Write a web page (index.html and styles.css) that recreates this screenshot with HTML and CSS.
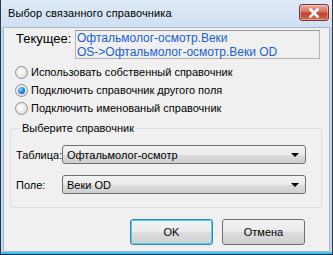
FILE: index.html
```html
<!DOCTYPE html>
<html lang="ru">
  <head>
    <meta charset="UTF-8" />
    <title>Выбор связанного справочника</title>
    <link rel="stylesheet" href="styles.css">
  </head>
  <body>
    <div class="window">
      <div class="titlebar">
        <span class="title">Выбор связанного справочника</span>
        <div class="close-btn">
          <svg width="14" height="10" viewBox="0 0 14 10">
            <path d="M3.5 1.5 L10.5 8.5 M10.5 1.5 L3.5 8.5" stroke="#fff" stroke-width="2.6" stroke-linecap="square" />
          </svg>
        </div>
      </div>
      <div class="client">
        <div class="current">
          <span class="current-label">Текущее:</span>
          <div class="current-box">
            <div>Офтальмолог-осмотр.Веки</div>
            <div>OS-&gt;Офтальмолог-осмотр.Веки OD</div>
          </div>
        </div>

        <div class="radios">
          <label class="radio"><span class="dot"></span>Использовать собственный справочник</label>
          <label class="radio checked"><span class="dot"></span>Подключить справочник другого поля</label>
          <label class="radio"><span class="dot"></span>Подключить именованый справочник</label>
        </div>

        <fieldset class="group">
          <legend>Выберите справочник</legend>
          <div class="row">
            <span class="row-label">Таблица:</span>
            <div class="combo"><span>Офтальмолог-осмотр</span><span class="arrow"></span></div>
          </div>
          <div class="row">
            <span class="row-label">Поле:</span>
            <div class="combo"><span>Веки OD</span><span class="arrow"></span></div>
          </div>
        </fieldset>

        <div class="buttons">
          <button class="btn default">OK</button>
          <button class="btn">Отмена</button>
        </div>
      </div>
    </div>
  </body>
</html>
```

FILE: styles.css
```css
* {
  margin: 0;
  padding: 0;
  box-sizing: border-box;
  font-family: Tahoma, "Liberation Sans", sans-serif;
}

body {
  width: 333px;
  height: 255px;
  overflow: hidden;
  background: #ffffff;
}

.window {
  width: 333px;
  height: 255px;
  display: flex;
  flex-direction: column;
  border-left: 1px solid #2b3746;
  border-right: 1px solid #2b3746;
  border-bottom: 1px solid #1c2a38;
  background: #c2d6ec;
  padding: 0 2px 2px 2px;
  position: relative;
}

/* cyan glow along the bottom edge */
.window::after {
  content: "";
  position: absolute;
  left: 0;
  right: 0;
  bottom: 0;
  height: 2px;
  background: #3cc4f2;
}

.titlebar {
  height: 27px;
  flex-shrink: 0;
  display: flex;
  align-items: flex-start;
  justify-content: space-between;
  margin: 0 -2px;
  padding: 4px 3px 0 7px;
  background: linear-gradient(to bottom, #dfeaf7 0%, #cfdff2 100%);
}

.title {
  font-size: 11px;
  letter-spacing: 0.1px;
  color: #000;
  padding-top: 3px;
}

.close-btn {
  width: 30px;
  height: 17px;
  border: 1px solid #7a3633;
  border-radius: 3px;
  background: linear-gradient(to bottom, #e8aca2 0%, #d7715f 45%, #c0402c 55%, #d1704f 100%);
  box-shadow: inset 0 0 0 1px rgba(255, 255, 255, 0.35);
  display: flex;
  align-items: center;
  justify-content: center;
}

.client {
  flex: 1;
  background: #f0f0f0;
  border: 1px solid #a8b8cc;
  padding: 2px 7px 0 6px;
  color: #000;
}

.current {
  display: flex;
  align-items: flex-start;
}

.current-label {
  width: 65px;
  padding: 1px 0 0 6px;
  font-size: 13px;
}

.current-box {
  flex: 1;
  height: 29px;
  margin-right: 2px;
  border: 1px solid #b4b4b4;
  border-top-color: #9a9a9a;
  padding: 0 1px;
  color: #1a5fd6;
  font-size: 12px;
  line-height: 14px;
}

.radios {
  display: flex;
  flex-direction: column;
  gap: 2px;
  margin: 5px 0 0 5px;
}

.radio {
  display: flex;
  align-items: center;
  height: 16px;
  gap: 3px;
  font-size: 11px;
}

.dot {
  width: 13px;
  height: 13px;
  border-radius: 50%;
  border: 1px solid #8f8f8f;
  background: radial-gradient(circle at 40% 40%, #ffffff 0%, #e6e6e6 60%, #d0d0d0 100%);
  display: flex;
  align-items: center;
  justify-content: center;
}

.radio.checked .dot::after {
  content: "";
  width: 7px;
  height: 7px;
  border-radius: 50%;
  background: radial-gradient(circle at 35% 35%, #8ad6ff 0%, #1f7ed6 55%, #0a4a9a 100%);
}

.group {
  margin-top: 6px;
  height: 86px;
  border: 1px solid #d5dfe5;
  border-radius: 3px;
  padding: 0 15px 0 5px;
}

.group legend {
  font-size: 11px;
  line-height: 13px;
  padding: 0 2px;
  margin-left: 4px;
}

.row {
  display: flex;
  align-items: center;
  margin-top: 10px;
}

.row + .row {
  margin-top: 11px;
}

.row-label {
  width: 46px;
  font-size: 11px;
}

.combo {
  flex: 1;
  height: 19px;
  border: 1px solid #707070;
  border-radius: 3px;
  background: linear-gradient(to bottom, #f2f2f2 0%, #ebebeb 50%, #dddddd 51%, #cfcfcf 100%);
  display: flex;
  align-items: center;
  justify-content: space-between;
  padding: 0 6px 0 4px;
  font-size: 11px;
}

.arrow {
  width: 0;
  height: 0;
  border-left: 4px solid transparent;
  border-right: 4px solid transparent;
  border-top: 4px solid #000;
}

.buttons {
  display: flex;
  justify-content: flex-end;
  gap: 9px;
  margin-top: 11px;
  padding-right: 17px;
}

.btn {
  width: 83px;
  height: 26px;
  border: 1px solid #707070;
  border-radius: 3px;
  background: linear-gradient(to bottom, #f2f2f2 0%, #ebebeb 50%, #dddddd 51%, #cfcfcf 100%);
  font-size: 11px;
  color: #000;
}

.btn.default {
  border-color: #3c7fb1;
  box-shadow: inset 0 0 0 1px #48d7f8;
}
```
